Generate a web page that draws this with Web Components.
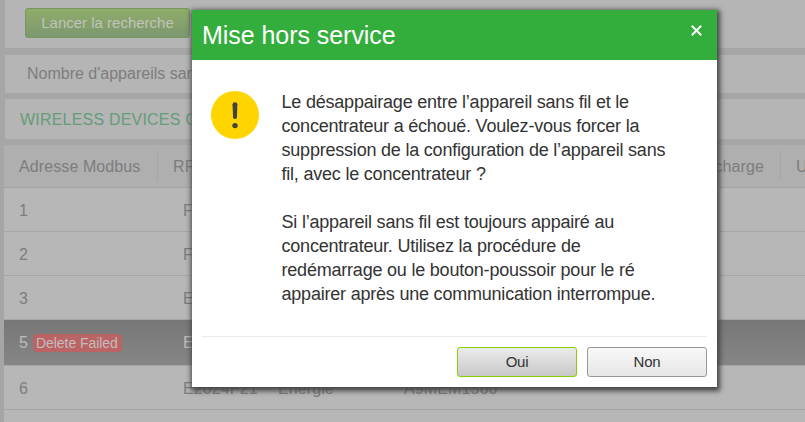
<!DOCTYPE html>
<html lang="fr">
<head>
<meta charset="utf-8">
<title>Mise hors service</title>
<style>
	html, body {
		margin: 0;
		height: 100%;
		overflow: hidden;
	}
	body {
		background: #a6a6a6;
		color: #7d7d7d;
		font: 16px/20px "Liberation Sans", Arial, sans-serif;
	}
</style>
</head>
<body>
<device-page>
	<page-panel style="--height: 48px; --pad: 20px"><search-button>Lancer la recherche</search-button></page-panel>
	<page-panel style="--height: 38px; --pad: 22px">Nombre d'appareils san</page-panel>
	<page-panel style="--height: 40px; --pad: 15px; --drop: 2px; --gap: 6px; color: #659c79; letter-spacing: 0.2px">WIRELESS DEVICES C</page-panel>
	<device-table></device-table>
</device-page>
<modal-dialog heading="Mise hors service">
	<warning-icon slot="icon"></warning-icon>
	<p>Le désappairage entre l’appareil sans fil et le<br>concentrateur a échoué. Voulez-vous forcer la<br>suppression de la configuration de l’appareil sans<br>fil, avec le concentrateur ?</p>
	<p>Si l’appareil sans fil est toujours appairé au<br>concentrateur. Utilisez la procédure de<br>redémarrage ou le bouton-poussoir pour le ré<br>appairer après une communication interrompue.</p>
	<dialog-button slot="actions" primary>Oui</dialog-button>
	<dialog-button slot="actions">Non</dialog-button>
</modal-dialog>

<script>
function attach(element, html) {
	let shadow = element.attachShadow({mode: "open"});
	shadow.innerHTML = html;
	return shadow;
}

class DevicePage extends HTMLElement {
	connectedCallback() {
		attach(this, `
			<style>
				:host {
					display: flex;
					flex-direction: column;
					height: 422px;
					overflow: hidden;
				}
			</style>
			<slot></slot>
		`);
	}
}
customElements.define("device-page", DevicePage);

// --height, --pad and --drop set the box, --gap the space below it.
class PagePanel extends HTMLElement {
	connectedCallback() {
		attach(this, `
			<style>
				:host {
					display: flex;
					flex: none;
					align-items: center;
					box-sizing: border-box;
					height: var(--height);
					margin-left: 5px;
					margin-bottom: var(--gap, 6.5px);
					padding-left: var(--pad);
					padding-top: var(--drop, 0);
					background: #b5b5b5;
					white-space: nowrap;
				}
			</style>
			<slot></slot>
		`);
	}
}
customElements.define("page-panel", PagePanel);

class SearchButton extends HTMLElement {
	connectedCallback() {
		attach(this, `
			<style>
				:host {
					display: flex;
					align-items: center;
					justify-content: center;
					box-sizing: border-box;
					width: 165px;
					height: 30px;
					margin-bottom: 2px;
					border: 1px solid #779661;
					border-radius: 3px;
					background: linear-gradient(#90ac68, #7c9871);
					color: #c0c4bb;
					font-size: 15px;
				}
			</style>
			<slot></slot>
		`);
	}
}
customElements.define("search-button", SearchButton);

const devices = [
	{"address": "1", "cells": ["F"]},
	{"address": "2", "cells": ["F"]},
	{"address": "3", "cells": ["E"]},
	{"address": "5", "cells": ["E"], "status": "Delete Failed"},
	{"address": "6", "cells": ["E2024F21", "Energie", "A9MEM1560"]},
	{"address": "", "cells": []}
];

class DeviceTable extends HTMLElement {
	connectedCallback() {
		let shadow = attach(this, `
			<style>
				:host {
					display: block;
					flex: none;
					margin-left: 4px;
					letter-spacing: 0.1px;
				}
				#head {
					display: grid;
					grid-template-columns: 154px 1fr 24px;
					align-items: center;
					box-sizing: border-box;
					height: 43px;
					background: #afafaf;
					border-bottom: 1px solid #a3a3a3;
				}
				#head > span {
					box-sizing: border-box;
					height: 30px;
					line-height: 31px;
					padding: 0 16px 0 15px;
					border-right: 1px solid #a5a5a5;
				}
				#head .pair {
					display: flex;
					justify-content: space-between;
				}
				#head > span:last-child {
					padding: 0 0 0 15px;
					border: 0;
				}
			</style>
			<div id="head"><span>Adresse Modbus</span><span class="pair"><span>RF</span><span>charge</span></span><span>U</span></div>
		`);
		for (let device of devices) {
			let row = document.createElement("device-row");
			row.device = device;
			shadow.appendChild(row);
		}
	}
}
customElements.define("device-table", DeviceTable);

class DeviceRow extends HTMLElement {
	// device: {address, cells[], status}

	connectedCallback() {
		let shadow = attach(this, `
			<style>
				:host {
					display: grid;
					grid-template-columns: 164px 95px 126px 1fr;
					align-items: center;
					box-sizing: border-box;
					height: 44px;
					padding: 2px 0 0 15px;
					background: #b7b7b7;
					border-bottom: 1px solid #a6a6a6;
				}
				:host(.selected) {
					height: 46px;
					padding-top: 0;
					background: linear-gradient(#777, #868688);
					color: #bdbdbd;
				}
				#address {
					display: flex;
					align-items: center;
					gap: 5px;
				}
				#status {
					padding: 0 4px 0 3px;
					border-radius: 4px;
					background: #ba6465;
					color: #c4bcbc;
					font-size: 14px;
					line-height: 18px;
					letter-spacing: -0.05px;
				}
			</style>
			<div id="address"></div>
		`);
		let address = shadow.getElementById("address");
		address.textContent = this.device.address;
		if (this.device.status) {
			this.classList.add("selected");
			let status = document.createElement("span");
			status.id = "status";
			status.textContent = this.device.status;
			address.appendChild(status);
		}
		for (let text of this.device.cells) {
			let cell = document.createElement("span");
			cell.textContent = text;
			shadow.appendChild(cell);
		}
	}
}
customElements.define("device-row", DeviceRow);

class WarningIcon extends HTMLElement {
	connectedCallback() {
		attach(this, `
			<style>
				:host, svg {
					display: block;
				}
			</style>
			<svg width="48" height="48" viewBox="0 0 48 48">
				<circle cx="24" cy="24" r="24" fill="#ffd500"/>
				<path d="M21.5 13.2Q21.6 11.3 24 11.3T26.4 13.2L25.9 26.5Q25.7 28 24 28T22.1 26.5Z" fill="#424340"/>
				<circle cx="24" cy="34.6" r="2.7" fill="#424340"/>
			</svg>
		`);
	}
}
customElements.define("warning-icon", WarningIcon);

class ModalDialog extends HTMLElement {
	connectedCallback() {
		let shadow = attach(this, `
			<style>
				:host {
					position: absolute;
					left: 192px;
					top: 10px;
					display: flex;
					flex-direction: column;
					width: 525px;
					height: 377px;
					background: #fff;
					color: #333;
					box-shadow: 1px 2px 5px 2px #444;
				}
				header {
					display: flex;
					justify-content: space-between;
					box-sizing: border-box;
					height: 50px;
					padding: 0 15px 0 10px;
					background: #33ad3b;
					color: #fff;
					font-size: 25px;
					line-height: 51px;
					letter-spacing: -0.05px;
				}
				header svg {
					margin-top: 15px;
				}
				main {
					display: flex;
					flex: 1;
					gap: 22.5px;
					padding: 31px 0 0 19px;
				}
				#text {
					font-size: 18px;
					line-height: 24px;
					letter-spacing: -0.21px;
					margin-top: -1px;
					white-space: nowrap;
				}
				::slotted(p) {
					margin: 0 0 24px;
				}
				footer {
					display: flex;
					flex: none;
					justify-content: flex-end;
					gap: 10px;
					height: 40px;
					margin: 0 10px;
					padding-top: 10px;
					border-top: 1px solid #eaeaea;
				}
			</style>
			<header>
				<span id="heading"></span>
				<svg width="11" height="11" viewBox="0 0 11 11"><path d="M.8 .8L10.2 10.2M10.2 .8L.8 10.2" stroke="#fff" stroke-width="2"/></svg>
			</header>
			<main>
				<slot name="icon"></slot>
				<div id="text"><slot></slot></div>
			</main>
			<footer><slot name="actions"></slot></footer>
		`);
		shadow.getElementById("heading").textContent = this.getAttribute("heading");
	}
}
customElements.define("modal-dialog", ModalDialog);

class DialogButton extends HTMLElement {
	connectedCallback() {
		attach(this, `
			<style>
				:host {
					display: flex;
					align-items: center;
					justify-content: center;
					box-sizing: border-box;
					width: 120px;
					height: 30px;
					border: 1px solid #999;
					border-radius: 3px;
					background: linear-gradient(#f8f8f8, #e6e6e6);
					font-size: 15px;
					letter-spacing: -0.2px;
					cursor: pointer;
				}
				:host([primary]) {
					border-color: #87d300;
					background: linear-gradient(#ebebeb, #c8c8c8);
				}
			</style>
			<slot></slot>
		`);
	}
}
customElements.define("dialog-button", DialogButton);
</script>
</body>
</html>
